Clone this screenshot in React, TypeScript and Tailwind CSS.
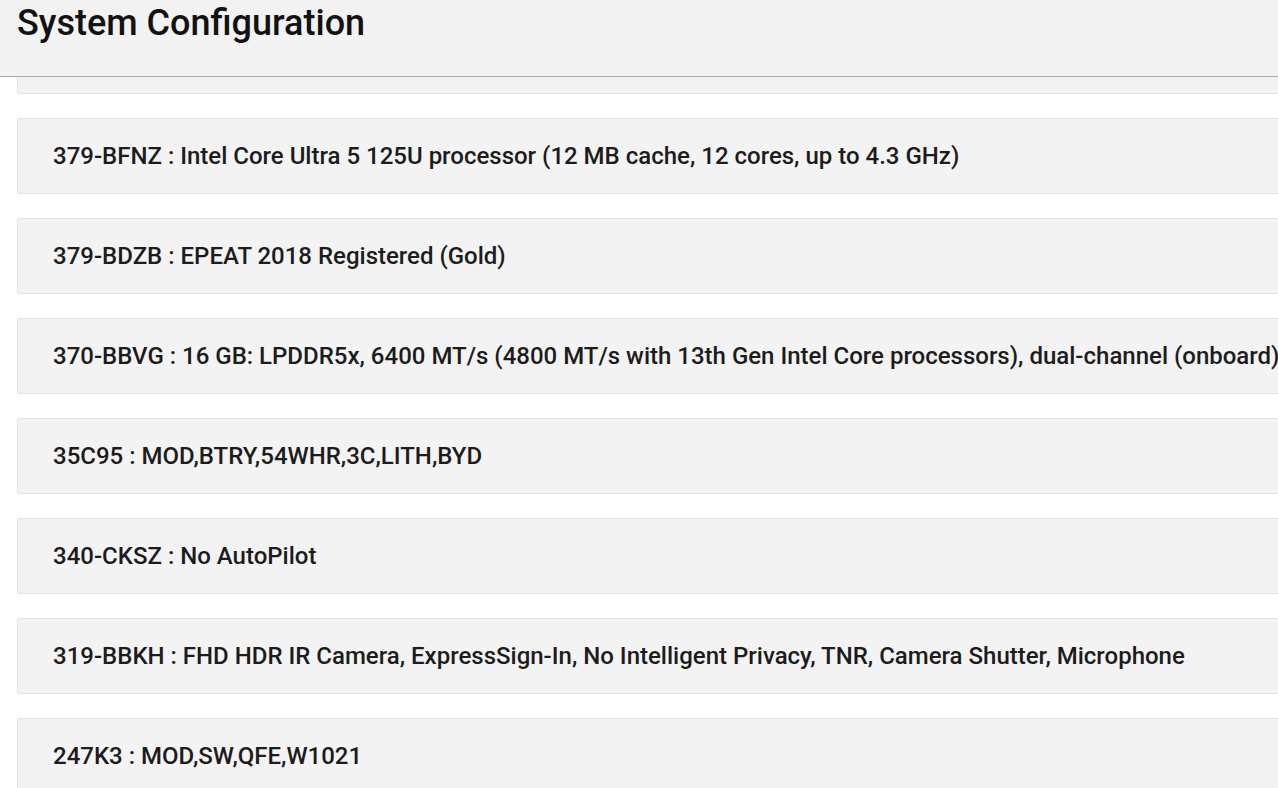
const items = [
  "379-XXXX : Hidden",
  "379-BFNZ : Intel Core Ultra 5 125U processor (12 MB cache, 12 cores, up to 4.3 GHz)",
  "379-BDZB : EPEAT 2018 Registered (Gold)",
  "370-BBVG : 16 GB: LPDDR5x, 6400 MT/s (4800 MT/s with 13th Gen Intel Core processors), dual-channel (onboard)",
  "35C95 : MOD,BTRY,54WHR,3C,LITH,BYD",
  "340-CKSZ : No AutoPilot",
  "319-BBKH : FHD HDR IR Camera, ExpressSign-In, No Intelligent Privacy, TNR, Camera Shutter, Microphone",
  "247K3 : MOD,SW,QFE,W1021",
  "210-XXXX : Hidden",
];

const App = () => {
  return (
    <div className="h-[788px] w-[1278px] overflow-hidden bg-white flex flex-col font-['Roboto',sans-serif] text-[#1c1c1c]">
      <div className="relative z-10 h-[77px] shrink-0 bg-[#f2f2f2] border-b border-[#a9a9a9] px-[17px] pt-[1px]">
        <h1 className="text-[36px] font-medium leading-[44px] text-[#121212]">System Configuration</h1>
      </div>
      <div className="-mt-[59px] pl-[17px] flex flex-col gap-[24px]">
        {items.map((text, i) => (
          <div
            key={i}
            className="w-[1300px] h-[76px] shrink-0 flex items-center bg-[#f3f3f3] border border-[#e3e3e3] rounded-[2px] px-[35px] whitespace-nowrap overflow-hidden"
          >
            <span className={i === 0 ? "invisible text-[24px] font-medium leading-[30px]" : "text-[24px] font-medium leading-[30px]"}>{text}</span>
          </div>
        ))}
      </div>
    </div>
  );
};

export default App;
